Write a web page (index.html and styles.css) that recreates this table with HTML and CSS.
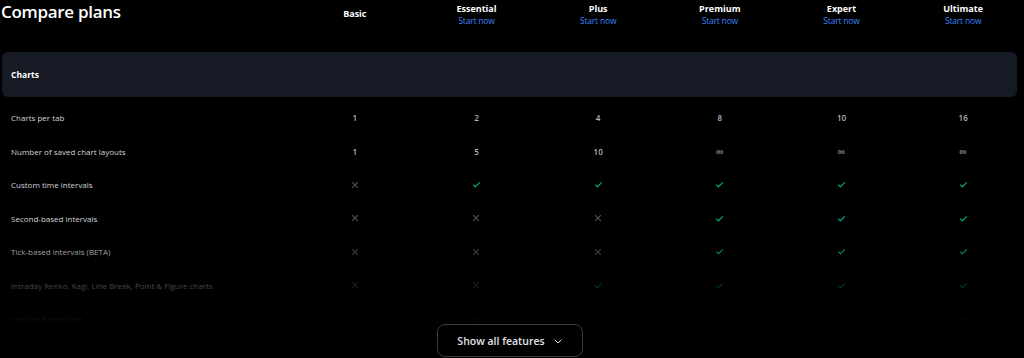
FILE: index.html
```html
<!DOCTYPE html>
<html lang="en">
<head>
    <meta charset="UTF-8">
    <meta name="viewport" content="width=device-width, initial-scale=1.0">
    <title>Compare plans</title>
    <link rel="stylesheet" href="styles.css">
</head>
<body>
    <div class="compare">
        <div class="compare-table">
            <div class="plans-head">
                <h1 class="title">Compare plans</h1>
                <div class="plan plan-basic"><span class="plan-name">Basic</span></div>
                <div class="plan"><span class="plan-name">Essential</span><a class="start-link">Start now</a></div>
                <div class="plan"><span class="plan-name">Plus</span><a class="start-link">Start now</a></div>
                <div class="plan"><span class="plan-name">Premium</span><a class="start-link">Start now</a></div>
                <div class="plan"><span class="plan-name">Expert</span><a class="start-link">Start now</a></div>
                <div class="plan"><span class="plan-name">Ultimate</span><a class="start-link">Start now</a></div>
            </div>

            <div class="section-title">Charts</div>

            <div class="feature-row">
                <div class="feature-name">Charts per tab</div>
                <div class="cell">1</div><div class="cell">2</div><div class="cell">4</div>
                <div class="cell">8</div><div class="cell">10</div><div class="cell">16</div>
            </div>
            <div class="feature-row">
                <div class="feature-name">Number of saved chart layouts</div>
                <div class="cell">1</div><div class="cell">5</div><div class="cell">10</div>
                <div class="cell inf">∞</div><div class="cell inf">∞</div><div class="cell inf">∞</div>
            </div>
            <div class="feature-row" data-marks="xvvvvv">
                <div class="feature-name">Custom time intervals</div>
            </div>
            <div class="feature-row" data-marks="xxxvvv">
                <div class="feature-name">Second-based intervals</div>
            </div>
            <div class="feature-row" data-marks="xxxvvv">
                <div class="feature-name">Tick-based intervals (BETA)</div>
            </div>
            <div class="feature-row" data-marks="xxvvvv">
                <div class="feature-name">Intraday Renko, Kagi, Line Break, Point &amp; Figure charts</div>
            </div>
            <div class="feature-row" data-marks="xxvvvv">
                <div class="feature-name">Custom Range bars</div>
            </div>
        </div>

        <div class="show-all-wrap">
            <button class="show-all">Show all features
                <svg width="10" height="10" viewBox="0 0 10 10"><path d="M1.5 3.5 5 7l3.5-3.5" fill="none" stroke="currentColor" stroke-width="1"/></svg>
            </button>
        </div>
    </div>

    <script>
        // Заповнюємо клітинки галочками та хрестиками
        const check = '<svg width="9" height="9" viewBox="0 0 9 9"><path d="M1.3 4.8 3.4 6.8 7.8 2.4" fill="none" stroke="#089981" stroke-width="1.3"/></svg>';
        const cross = '<svg width="8" height="8" viewBox="0 0 8 8"><path d="M1.2 1.2l5.6 5.6M6.8 1.2 1.2 6.8" fill="none" stroke="#50535e" stroke-width="1.1"/></svg>';

        document.querySelectorAll('.feature-row[data-marks]').forEach((row) => {
            row.dataset.marks.split('').forEach((mark) => {
                const cell = document.createElement('div');
                cell.className = 'cell';
                cell.innerHTML = mark === 'v' ? check : cross;
                row.appendChild(cell);
            });
        });
    </script>
</body>
</html>
```

FILE: styles.css
```css
* {
    margin: 0;
    padding: 0;
    box-sizing: border-box;
}

body {
    font-family: "Open Sans", Arial, sans-serif;
    background-color: #000;
    color: #d1d4dc;
    overflow: hidden;
}

.compare {
    width: 1024px;
    height: 358px;
}

.compare-table {
    position: relative;
    height: 323px;
    overflow: hidden;
}

/* затемнення знизу таблиці */
.compare-table::after {
    content: "";
    position: absolute;
    left: 0;
    right: 0;
    top: 235px;
    bottom: 0;
    background: linear-gradient(to bottom, rgba(0,0,0,0) 0%, rgba(0,0,0,0.6) 45%, rgba(0,0,0,0.97) 100%);
}

.plans-head,
.feature-row {
    display: grid;
    grid-template-columns: 294px repeat(6, 1fr);
    align-items: center;
}

.plans-head {
    height: 48px;
    align-items: start;
}

.title {
    font-size: 17px;
    font-weight: 600;
    color: #fff;
    letter-spacing: -0.3px;
    line-height: 24px;
    padding-left: 1px;
}

.plan {
    display: flex;
    flex-direction: column;
    align-items: center;
    padding-top: 3px;
    line-height: 12px;
}

.plan-basic {
    padding-top: 8px;
}

.plan-name {
    font-size: 9px;
    font-weight: 700;
    color: #fff;
}

.start-link {
    font-size: 8.5px;
    color: #3b82f6;
    letter-spacing: -0.2px;
}

.section-title {
    height: 45px;
    margin: 4px 7px 4px 2px;
    background: #161a25;
    border-radius: 6px;
    font-size: 8.5px;
    font-weight: 700;
    color: #fff;
    display: flex;
    align-items: center;
    padding-left: 9px;
}

.feature-row {
    height: 33.5px;
}

.feature-name {
    font-size: 8px;
    padding-left: 11px;
    color: #d1d4dc;
    white-space: nowrap;
}

.cell {
    display: flex;
    justify-content: center;
    align-items: center;
    font-size: 8px;
    font-weight: 600;
    color: #b2b5be;
}

.cell.inf {
    font-size: 11px;
    font-weight: 400;
}

.show-all-wrap {
    display: flex;
    justify-content: center;
    padding-top: 1px;
}

.show-all {
    width: 146px;
    height: 33px;
    margin-left: -4px;
    background: #000;
    border: 1px solid #3a3d46;
    border-radius: 8px;
    color: #e0e3eb;
    font-family: inherit;
    font-size: 10.5px;
    font-weight: 600;
    display: flex;
    align-items: center;
    justify-content: center;
    gap: 8px;
    cursor: pointer;
}
```
